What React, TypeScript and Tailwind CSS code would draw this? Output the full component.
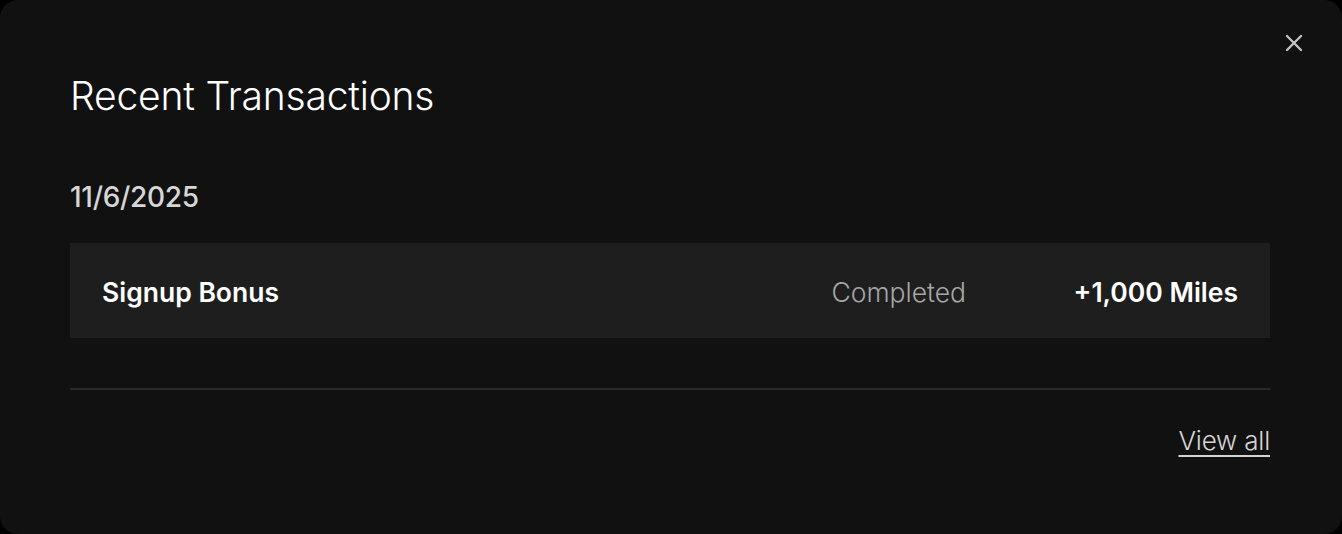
import { X } from "lucide-react";

const font = { fontFamily: "Inter, 'Liberation Sans', sans-serif" };

export default function App() {
  return (
    <div className="w-[1342px] h-[534px] bg-black" style={font}>
      <div className="relative w-full h-full rounded-[18px] bg-[#111111] pl-[70px] pr-[72px] pt-[72px]">
        <button className="absolute right-[34px] top-[29px] text-[#c4c4c4]">
          <X size={28} strokeWidth={2} />
        </button>

        <h2 className="text-[39px] leading-[48px] font-light text-white tracking-[-0.2px]">
          Recent Transactions
        </h2>

        <div className="mt-[60px] text-[28px] leading-[34px] font-medium text-[#d6d6d6] tracking-[-0.3px]">
          11/6/2025
        </div>

        <div className="mt-[29px] h-[95px] bg-[#1e1e1e] flex items-center pl-[32px] pr-[32px] pt-[4px]">
          <div className="flex-1 text-[26.5px] font-semibold text-white tracking-[0px]">
            Signup Bonus
          </div>
          <div className="text-[26.5px] font-light text-[#a6a6a6] tracking-[0px]">Completed</div>
          <div className="w-[272px] text-right text-[26.5px] font-semibold text-white tracking-[0px]">
            +1,000 Miles
          </div>
        </div>

        <div className="mt-[50px] h-[2px] bg-[#2a2a2a]" />

        <div className="flex justify-end mt-[35px]">
          <a className="text-[26px] leading-[32px] font-light text-[#d4d4d4] underline underline-offset-[5px] decoration-[2px] tracking-[-0.2px]">
            View all
          </a>
        </div>
      </div>
    </div>
  );
}
